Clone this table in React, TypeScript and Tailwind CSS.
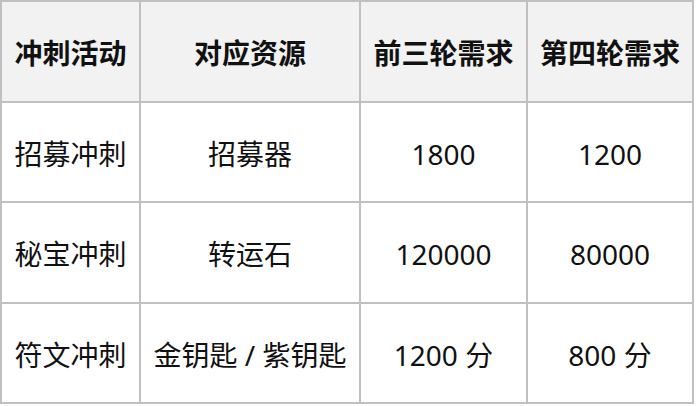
import React from "react";

const header = ["冲刺活动", "对应资源", "前三轮需求", "第四轮需求"];
const rows = [
  ["招募冲刺", "招募器", "1800", "1200"],
  ["秘宝冲刺", "转运石", "120000", "80000"],
  ["符文冲刺", "金钥匙 / 紫钥匙", "1200 分", "800 分"],
];

export default function App() {
  return (
    <div className="w-[696px] h-[406px] bg-white">
      <div
        className="grid w-[694px] h-[404px] bg-[#c0c0c0] p-[2px] gap-[2px] grid-cols-[137px_218px_165px_164px] grid-rows-[99px_98px_99px_98px] text-[28px] text-[#111111]"
        style={{ fontFamily: '"Noto Sans", "Noto Sans CJK SC", sans-serif' }}
      >
        {header.map((h) => (
          <div key={h} className="bg-[#f2f2f2] flex items-center justify-center font-bold pt-[3px]">
            {h}
          </div>
        ))}
        {rows.map((r, i) =>
          r.map((c, j) => (
            <div key={`${i}-${j}`} className="bg-white flex items-center justify-center pt-[3px]">
              {c}
            </div>
          ))
        )}
      </div>
    </div>
  );
}
